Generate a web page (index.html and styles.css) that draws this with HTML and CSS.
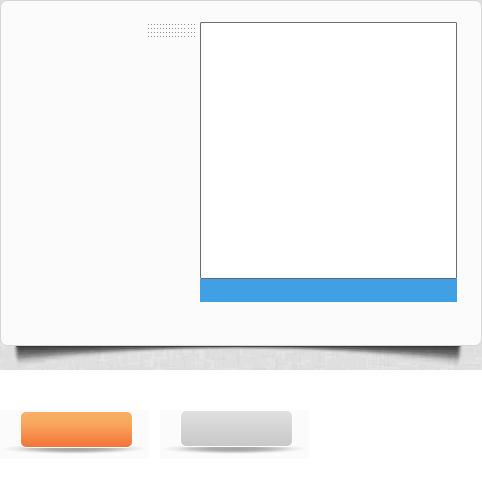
FILE: index.html
```
<!DOCTYPE html>
<html lang="en">
<head>
<meta charset="utf-8">
<title>Panel and buttons</title>
<link rel="stylesheet" href="styles.css">
</head>
<body>
<section class="stage">
  <svg class="backdrop" width="482" height="370" viewBox="0 0 482 370" aria-hidden="true">
    <defs>
      <filter id="soft" x="-5%" y="-20%" width="110%" height="140%"><feGaussianBlur stdDeviation="1.5 0.8"/></filter>
      <clipPath id="below"><rect y="346" width="482" height="24"/></clipPath>
    </defs>
    <rect width="482" height="370" fill="#dfdfdf"/>
    <g id="weave" shape-rendering="crispEdges"></g>
    <g clip-path="url(#below)"><g id="shadow" filter="url(#soft)"></g></g>
    <path d="M16 346.5H460" stroke="#333" stroke-opacity=".6"/>
  </svg>
  <main class="card">
    <svg class="dots" width="48" height="14" viewBox="0 0 48 14" shape-rendering="crispEdges" aria-hidden="true">
      <path d="M0 .5h37M40 .5h7M0 4.5h37M40 4.5h7M0 8.5h37M40 8.5h7M0 12.5h37M40 12.5h7" fill="none" stroke="#909090" stroke-dasharray="1 2"/>
    </svg>
    <div class="figure">
      <div class="frame"></div>
      <div class="caption"></div>
    </div>
  </main>
</section>
<section class="buttons">
  <div class="tile"><div class="button orange"></div><div class="glow"></div></div>
  <div class="tile"><div class="button gray"></div><div class="glow"></div></div>
</section>
<script src="script.js"></script>
</body>
</html>
```
FILE: styles.css
```
body {
  margin: 0;
  background: #fff;
  font-family: "Liberation Sans", sans-serif;
  overflow: hidden;
}
.stage {
  position: relative;
  height: 370px;
}
.backdrop {
  position: absolute;
  inset: 0;
}
.card {
  position: relative;
  box-sizing: border-box;
  width: 482px;
  height: 346px;
  padding: 21px 24px 0 147px;
  border: 1px solid #d6d6d6;
  border-radius: 7px;
  background: #fbfbfb;
  display: flex;
  justify-content: space-between;
}
.dots {
  margin-top: 2px;
}
.figure {
  width: 257px;
  height: 280px;
}
.frame {
  box-sizing: border-box;
  height: 257px;
  border: 1px solid #6b6b6b;
  border-radius: 1px;
  background: #fff;
}
.caption {
  height: 23px;
  background: #419fe3;
}
.buttons {
  display: flex;
  gap: 11px;
  padding-top: 40px;
}
.tile {
  box-sizing: border-box;
  width: 149px;
  height: 49px;
  padding-top: 1px;
  background: #fbfbfb;
}
.button {
  position: relative;
  z-index: 1;
  width: 111px;
  height: 35px;
  margin-left: 21px;
  border-radius: 5px;
  box-shadow: 0 0 0 1px #fff;
}
.orange {
  margin-top: 1px;
  background: linear-gradient(#f9b066, #f7a65d 35%, #f27338);
}
.gray {
  background: linear-gradient(#e0e0e0, #c8c8c8);
}
.glow {
  height: 9px;
  margin: -1px 2px 0;
  background: radial-gradient(ellipse 50% 60% at 50% 30%, #a4a4a4, #acacac 35%, #c8c8c8 60%, #eaeaea 80%, #fbfbfb);
}
.gray + .glow {
  margin-top: 0;
}
```
FILE: script.js
```
const NS = "http://www.w3.org/2000/svg";
const add = (parent, tag, attrs) => {
  const el = document.createElementNS(NS, tag);
  Object.entries(attrs).forEach(([k, v]) => el.setAttribute(k, v));
  parent.appendChild(el);
};

// Woven paper texture: short horizontal and vertical threads.
let seed = 17;
const rnd = () => (seed = (seed * 16807) % 2147483647) / 2147483647;
const weave = document.getElementById("weave");
const tones = ["#e6e6e6", "#e3e3e3", "#dadada", "#d8d8d8", "#e8e8e8"];
for (let i = 0; i < 500; i++) {
  const across = rnd() > 0.5;
  const len = 5 + Math.floor(rnd() * 9);
  const thick = 1 + Math.floor(rnd() * 3);
  add(weave, "rect", {
    x: Math.floor(rnd() * 490) - 8,
    y: 338 + Math.floor(rnd() * 32),
    width: across ? len : thick,
    height: across ? thick : len,
    fill: tones[Math.floor(rnd() * tones.length)],
    "fill-opacity": 0.6
  });
}

// Lifted-corner shadow: nested arcs, deepest at both ends and fading downwards.
const shadow = document.getElementById("shadow");
for (let d = 1; d <= 22; d++) {
  const inset = 16 + d * 0.06;
  add(shadow, "path", {
    d: `M${inset} 340V${346 + d}Q238 ${346.5 - d * 0.8} ${476 - inset} ${346 + d}V340Z`,
    fill: "#222",
    "fill-opacity": d < 14 ? 0.115 : 0.115 * (24 - d) / 14 * 0.55
  });
}
```
